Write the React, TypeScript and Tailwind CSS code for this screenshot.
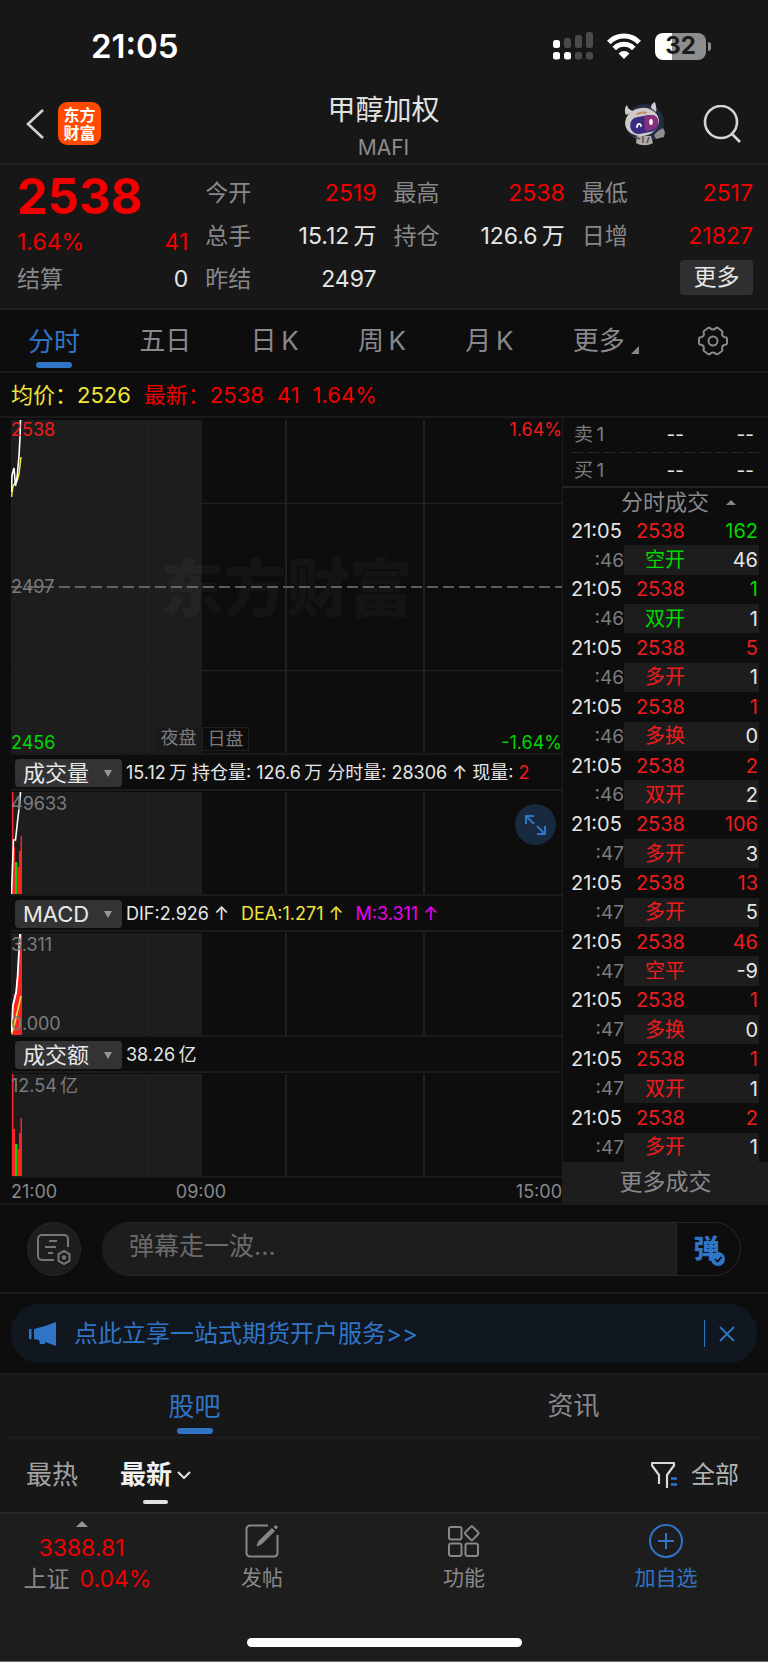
import type { ReactNode } from "react";

const RED = "text-[#ee1c1c]";
const GREEN = "text-[#00d800]";

const trades = [
  { sec: ":46", price: "2538", vol: "162", kind: "空开", diff: "46", up: false },
  { sec: ":46", price: "2538", vol: "1", kind: "双开", diff: "1", up: false },
  { sec: ":46", price: "2538", vol: "5", kind: "多开", diff: "1", up: true },
  { sec: ":46", price: "2538", vol: "1", kind: "多换", diff: "0", up: true },
  { sec: ":46", price: "2538", vol: "2", kind: "双开", diff: "2", up: true },
  { sec: ":47", price: "2538", vol: "106", kind: "多开", diff: "3", up: true },
  { sec: ":47", price: "2538", vol: "13", kind: "多开", diff: "5", up: true },
  { sec: ":47", price: "2538", vol: "46", kind: "空平", diff: "-9", up: true },
  { sec: ":47", price: "2538", vol: "1", kind: "多换", diff: "0", up: true },
  { sec: ":47", price: "2538", vol: "1", kind: "双开", diff: "1", up: true },
  { sec: ":47", price: "2538", vol: "2", kind: "多开", diff: "1", up: true },
];

const StatusBar = () => (
  <div className="flex h-[84px] items-center justify-between pt-2 pl-[91px] pr-[57px]">
    <span className="text-[33px] font-semibold leading-none text-white">21:05</span>
    <div className="flex items-center gap-[14px]">
      <svg className="h-7 w-10" viewBox="0 0 40 28">
        <g fill="#4a4a4a">
          <rect x="11" y="6" width="7" height="10" rx="2.5" />
          <rect x="22" y="3" width="7" height="13" rx="2.5" />
          <rect x="33" y="0" width="7" height="16" rx="2.5" />
          <rect x="22" y="20" width="7" height="7.5" rx="2.5" />
          <rect x="33" y="20" width="7" height="7.5" rx="2.5" />
        </g>
        <g fill="#fff">
          <rect x="0" y="8" width="7" height="8" rx="2.5" />
          <rect x="0" y="20" width="7" height="7.5" rx="2.5" />
          <rect x="11" y="20" width="7" height="7.5" rx="2.5" />
        </g>
      </svg>
      <svg className="h-[26px] w-[34px]" viewBox="0 0 34 26" fill="none" stroke="#fff" strokeWidth="5">
        <path d="M1.8 9.4a21.5 21.5 0 0 1 30.4 0" />
        <path d="M7.2 15.4a13.8 13.8 0 0 1 19.6 0" />
        <path d="M17 26l-5.400-5.600a7.400 7.400 0 0 1 10.800 0z" fill="#fff" stroke="none" />
      </svg>
      <div className="flex items-center gap-[2px]">
        <div className="flex h-[27px] w-[51px] items-center justify-center rounded-[8px] bg-linear-to-r from-white from-33% to-[#8e8e8e] to-33% text-[24px] font-bold leading-none text-[#1b1b1b]">
          32
        </div>
        <div className="h-[9px] w-[3px] rounded-r-full bg-[#8e8e8e]" />
      </div>
    </div>
  </div>
);

const Robot = () => (
  <svg className="h-[44px] w-[44px]" viewBox="0 0 44 44">
    <circle cx="22" cy="21" r="19" fill="#232c40" />
    <path d="M3 13c-2-4-1-8 1-10 1 4 4 6 8 6zM28 6c0-3 1-5 4-6 1 4 2 7 1 10z" fill="#cfcaca" />
    <ellipse cx="19" cy="20" rx="17" ry="14" fill="#cfcaca" transform="rotate(-10 19 20)" />
    <path d="M13 12c3-3 8-3 11-2l-1 2c-4-1-6 0-9 1z" fill="#c08a60" />
    <rect x="7" y="14" width="28" height="17" rx="8" fill="#3a2a80" transform="rotate(-10 21 22)" />
    <path d="M21 14l8-1c5 0 7 5 6 9s-6 7-13 7z" fill="#87307c" />
    <path d="M14 25c0-4 4-4 4-1" fill="none" stroke="#fff" strokeWidth="1.8" strokeLinecap="round" />
    <ellipse cx="28" cy="20" rx="1.8" ry="3" fill="#fff" />
    <path d="M14 34h14l2 7c-5 3-12 3-17 0z" fill="#b0aaaa" />
    <path d="M31 33l4-4 5-3 2 4-1 5-8 2z" fill="#8f8b90" />
    <path d="M20 34v7M12 35l5 2M26 35l-2 6" stroke="#5b555c" strokeWidth="1.5" />
  </svg>
);

const Header = () => (
  <header className="flex h-[81px] items-center border-b-2 border-[#222] pl-[26px] pr-[27px]">
    <div className="flex flex-1 items-center gap-3">
      <button aria-label="返回">
        <svg className="h-8 w-5" viewBox="0 0 20 32" fill="none" stroke="#d0d0d0" strokeWidth="2.6">
          <path d="M17 2L2 16l15 14" />
        </svg>
      </button>
      <div className="flex h-[43px] w-[43px] flex-col items-center justify-center rounded-[9px] bg-[#ff4a00] text-[16px] font-bold leading-[18px] text-white">
        <span>东方</span>
        <span>财富</span>
      </div>
    </div>
    <div className="flex flex-col items-center pt-1">
      <h1 className="text-[28px] leading-9 text-[#e2e2e2]">甲醇加权</h1>
      <p className="pt-2 text-[21px] leading-6 text-[#8b8b90]">MAFI</p>
    </div>
    <div className="flex flex-1 items-center justify-end gap-[36px]">
      <button aria-label="助手"><Robot /></button>
      <button aria-label="搜索">
        <svg className="h-[38px] w-[38px]" viewBox="0 0 38 38" fill="none" stroke="#d4d4d4" strokeWidth="2.6">
          <circle cx="18" cy="17" r="16" />
          <path d="M29 29l8 8" />
        </svg>
      </button>
    </div>
  </header>
);

const Stat = ({ label, value, red }: { label: string; value: string; red?: boolean }) => (
  <div className="flex h-[43px] items-center justify-between">
    <dt className="text-[#88888c]">{label}</dt>
    <dd className={red ? "text-[#f00000]" : "text-[#e6e6e6]"}>{value}</dd>
  </div>
);

const Quote = () => (
  <section className="grid h-[145px] grid-cols-4 gap-x-[17px] border-b-2 border-[#222] pl-[17px] pr-[15px] pt-[7px] text-[23px]">
    <div>
      <div className="h-[49px] text-[49px] font-bold leading-[49px] text-[#f00000]">2538</div>
      <div className="flex h-[37px] items-end justify-between leading-[31px] text-[#f00000]">
        <span>1.64%</span>
        <span>41</span>
      </div>
      <dl><Stat label="结算" value="0" /></dl>
    </div>
    <dl>
      <Stat label="今开" value="2519" red />
      <Stat label="总手" value="15.12&thinsp;万" />
      <Stat label="昨结" value="2497" />
    </dl>
    <dl>
      <Stat label="最高" value="2538" red />
      <Stat label="持仓" value="126.6&thinsp;万" />
    </dl>
    <div className="flex flex-col">
      <dl>
        <Stat label="最低" value="2517" red />
        <Stat label="日增" value="21827" red />
      </dl>
      <button className="mt-[2px] h-[35px] w-[73px] self-end rounded-[4px] bg-[#303030] leading-none text-[#e6e6e6]">
        更多
      </button>
    </div>
  </section>
);

const Periods = () => (
  <nav className="flex h-[63px] items-center justify-between border-b-2 border-[#1c1c1c] pl-7 pr-10 text-[26px] leading-none text-[#88888c]">
    <button className="flex h-full flex-col items-center justify-end gap-[7px] pb-[3px] text-[#3074c6]">
      分时
      <span className="h-[6px] w-9 rounded-[3px] bg-[#3074c6]" />
    </button>
    <button>五日</button>
    <button>日&thinsp;K</button>
    <button>周&thinsp;K</button>
    <button>月&thinsp;K</button>
    <button className="flex items-end gap-[6px]">
      更多
      <svg className="h-2 w-2" viewBox="0 0 8 8"><path d="M8 0v8H0z" fill="#88888c" /></svg>
    </button>
    <button aria-label="设置">
      <svg className="h-8 w-[30px]" viewBox="0 0 30 32" fill="none" stroke="#88888c" strokeWidth="2" strokeLinejoin="round">
        <path d="M10 3q2-1 3 1q2 1 4 0q1-2 3-1l4 3q1 1 0 3q0 2 2 3q3 0 3 2v4q0 2-3 2q-2 1-2 3q1 2 0 3l-4 3q-2 1-3-1q-2-1-4 0q-1 2-3 1l-4-3q-1-1 0-3q0-2-2-3q-3 0-3-2v-4q0-2 3-2q2-1 2-3q-1-2 0-3z" />
        <circle cx="15" cy="16" r="4.500" />
      </svg>
    </button>
  </nav>
);

// Night session shading plus the vertical session lines, shared by all panes
const Plot = ({ height, children }: { height: number; children?: ReactNode }) => (
  <svg className="block h-full w-full" viewBox={`0 0 551 ${height}`} preserveAspectRatio="none" fill="none">
    <rect width="191" height={height} fill="#1d1d1d" />
    <path d={`M137.5 0V${height}`} stroke="#222" />
    <path d={`M275 0V${height}M413 0V${height}`} stroke="#212121" strokeWidth="2" />
    {children}
  </svg>
);

const VolumeBars = () => (
  <>
    <path d="M1 102V0h1.500v55H4v47zM6.500 102V75H8V59h1.500V44H11v58z" fill="#f92424" />
    <path d="M4 102V70h2.500v32z" fill="#00d800" />
  </>
);

const Indicator = ({ name, info, children }: { name: string; info: ReactNode; children: ReactNode }) => (
  <>
    <div className="flex h-9 items-center gap-1 border-b-2 border-[#1c1c1c] pl-1 pt-[2px]">
      <button className="flex h-7 w-[107px] shrink-0 items-center justify-between rounded-[4px] bg-[#333] pl-2 pr-[10px] text-[22px] leading-none text-[#e8e8e8]">
        {name}
        <svg className="h-[7px] w-2" viewBox="0 0 8 7"><path d="M0 0h8L4 7z" fill="#96969a" /></svg>
      </button>
      <div className="flex gap-[5px] whitespace-nowrap text-[18px] leading-none text-[#e6e6e6]">{info}</div>
    </div>
    <div className="relative h-[105px] border-b-2 border-[#1a1a1a] pt-px text-[18px] leading-[22px] text-[#7b7b80]">
      {children}
    </div>
  </>
);

const Charts = () => (
  <div className="min-w-0 flex-1">
    <div className="relative h-[337px] border-b-2 border-[#1a1a1a] pt-[2px] text-[18px] leading-5">
      <svg className="block h-full w-full" viewBox="0 0 551 333" preserveAspectRatio="none" fill="none">
        <rect width="191" height="333" fill="#1d1d1d" />
        <path d="M137.5 0V333" stroke="#222" />
        <path d="M275 0V333M413 0V333" stroke="#212121" strokeWidth="2" />
        <path d="M0 83.5H551M0 250.5H551" stroke="#222" strokeWidth="1.5" />
        <path d="M0 167H551" stroke="#77777b" strokeWidth="1.5" strokeDasharray="11 5" />
        <path d="M.5 77L2 66l2-3 2-2 2-7 2-17" stroke="#f0e63a" strokeWidth="1.5" />
        <path d="M.5 72L1 55l2-7 1.500 18L6 58l2-22 1-18 .5-18" stroke="#fff" strokeWidth="1.6" />
      </svg>
      <div className="absolute inset-x-0 top-[135px] text-center text-[63px] font-black leading-[70px] text-white/3">
        东方财富
      </div>
      <span className={`absolute left-0 top-[2px] ${RED}`}>2538</span>
      <span className={`absolute right-0 top-[2px] ${RED}`}>1.64%</span>
      <span className="absolute left-0 top-[159px] text-[#7b7b80]">2497</span>
      <span className={`absolute bottom-0 left-0 ${GREEN}`}>2456</span>
      <span className={`absolute bottom-0 right-0 ${GREEN}`}>-1.64%</span>
      <div className="absolute bottom-[2px] left-[144px] flex leading-[22px] text-[#7b7b80]">
        <span className="w-[47px] bg-[#1a1a1a] text-center">夜盘</span>
        <span className="w-[47px] border border-[#1f1f1f] bg-[#0d0d0d] text-center">日盘</span>
      </div>
    </div>

    <Indicator
      name="成交量"
      info={
        <>
          <span>15.12&thinsp;万</span>
          <span>持仓量: 126.6&thinsp;万</span>
          <span>分时量: 28306 ↑</span>
          <span>现量: <span className={RED}>2</span></span>
        </>
      }
    >
      <Plot height={102}>
        <VolumeBars />
        <path d="M.5 102L2.500 48h2L7 25l1.500-12L9.500 0" stroke="#fff" strokeWidth="1.6" />
      </Plot>
      <span className="absolute left-0 top-[2px]">49633</span>
      <button aria-label="全屏" className="absolute right-[6px] top-[13px] flex h-[41px] w-[41px] items-center justify-center rounded-full bg-[#172a40]">
        <svg className="h-5 w-[21px]" viewBox="0 0 21 20" fill="none" stroke="#3074c6" strokeWidth="2">
          <path d="M1 9V1h8M1 1l8 8M20 11v8h-8M20 19l-8-8" />
        </svg>
      </button>
    </Indicator>

    <Indicator
      name="MACD"
      info={
        <>
          <span className="mr-[7px]">DIF:2.926 ↑</span>
          <span className="mr-[7px] text-[#efe33a]">DEA:1.271 ↑</span>
          <span className="text-[#f000f0]">M:3.311 ↑</span>
        </>
      }
    >
      <Plot height={102}>
        <path d="M1 102V80h1.500V61H5V45h2V20h1.500V1H11v101z" fill="#f92424" />
        <path d="M.5 101l3-10L7 76l3-13" stroke="#f0e63a" strokeWidth="1.6" />
        <path d="M.5 99L2 72l3-12 1.500-15L8 18l1-17" stroke="#fff" strokeWidth="1.8" />
      </Plot>
      <span className="absolute left-0 top-[2px]">3.311</span>
      <span className="absolute bottom-0 left-0">0.000</span>
    </Indicator>

    <Indicator name="成交额" info={<span>38.26&thinsp;亿</span>}>
      <Plot height={102}><VolumeBars /></Plot>
      <span className="absolute left-0 top-[2px]">12.54&thinsp;亿</span>
    </Indicator>

    <div className="relative flex h-[25px] items-center justify-between pt-[2px] text-[18px] leading-none text-[#88888c]">
      <span>21:00</span>
      <span>15:00</span>
      <span className="absolute left-[190px] -translate-x-1/2">09:00</span>
    </div>
  </div>
);

const BookRow = ({ label }: { label: string }) => (
  <table className="w-full">
    <tbody>
      <tr className="h-8">
        <th className="pl-[11px] text-left font-normal text-[#7b7b80]">{label}</th>
        <td className="w-[70px] pr-[9px] text-right">--</td>
        <td className="w-[75px] pr-[14px] text-right">--</td>
      </tr>
    </tbody>
  </table>
);

const TradePanel = () => (
  <aside className="flex w-[206px] shrink-0 flex-col border-l border-[#1c1c1c] text-[19px] leading-none text-[#e6e6e6]">
    <BookRow label="卖&thinsp;1" />
    <div className="mb-px ml-[9px] mr-2 mt-[2px] h-px bg-[repeating-linear-gradient(90deg,#2c2c2c_0_11px,transparent_11px_16px)]" />
    <div className="border-b-2 border-[#242424]">
      <BookRow label="买&thinsp;1" />
    </div>
    <button className="flex h-7 items-center justify-end gap-[17px] pr-8 text-[22px] leading-none text-[#88888c]">
      分时成交
      <svg className="h-[5px] w-[10px]" viewBox="0 0 10 5"><path d="M0 5h10L5 0z" fill="#88888c" /></svg>
    </button>
    <table className="mr-[9px] h-[646px] text-[20px]">
      <tbody>
        {trades.map((t, i) => [
          <tr key={`${i}-a`}>
            <td className="pl-2">21:05</td>
            <td className={`pr-[23px] text-right ${RED}`}>{t.price}</td>
            <td className={`pr-px text-right ${t.up ? RED : GREEN}`}>{t.vol}</td>
          </tr>,
          <tr key={`${i}-b`}>
            <td className="w-[61px] text-right text-[19px] text-[#7b7b80]">{t.sec}</td>
            <td className={`w-[84px] bg-[#1d1d1d] pr-[23px] text-right ${t.up ? RED : GREEN}`}>{t.kind}</td>
            <td className="bg-[#1d1d1d] pr-px text-right">{t.diff}</td>
          </tr>,
        ])}
      </tbody>
    </table>
    <button className="flex-1 bg-[#1d1d1d] text-[23px] text-[#88888c]">更多成交</button>
  </aside>
);

const Danmu = () => (
  <div className="flex h-[91px] items-center gap-[21px] border-y-2 border-[#1a1a1a] px-[27px]">
    <button aria-label="弹幕设置" className="flex h-[54px] w-[54px] items-center justify-center rounded-full border border-[#262626] bg-[#1d1d1d]">
      <svg className="h-8 w-[34px]" viewBox="0 0 34 32" fill="none" stroke="#77777b" strokeWidth="2">
        <path d="M31 14V6a4 4 0 0 0-4-4H5a4 4 0 0 0-4 4v17a4 4 0 0 0 4 4h12M12 8h8M8 14h11M11 20h5" />
        <path d="M27 18l5.500 3v7L27 31l-5.500-3v-7z" />
        <circle cx="27" cy="24.5" r="1.2" />
      </svg>
    </button>
    <div className="flex h-[54px] flex-1 overflow-hidden rounded-full border border-[#262626]">
      <input
        aria-label="弹幕"
        placeholder="弹幕走一波..."
        className="min-w-0 flex-1 bg-[#1d1d1d] pb-1 pl-[26px] text-[25px] outline-none placeholder:text-[#6b6b6b]"
      />
      <button className="relative w-[64px] border-l border-[#262626] pr-1 text-[26px] font-black leading-none text-[#3074c6]">
        弹
        <svg className="absolute bottom-[9px] right-[15px] h-[14px] w-[14px]" viewBox="0 0 14 14" fill="none">
          <circle cx="7" cy="7" r="7" fill="#3074c6" />
          <path d="M4 7l2.500 2.500 4-4.500" stroke="#0d0d0d" strokeWidth="1.6" />
        </svg>
      </button>
    </div>
  </div>
);

const Banner = () => (
  <div className="border-b-2 border-[#1c1c1c] px-[11px] py-[10px]">
    <div className="flex h-[59px] items-center rounded-[28px] bg-[#10171e] pl-[18px] pr-[22px] text-[#3074c6]">
      <svg className="h-6 w-[27px]" viewBox="0 0 27 24" fill="#3074c6">
        <path d="M0 7h2.500v10H0zM5 7l11-3 11-4v24l-11-4v2h-5l-1-4-5-1z" />
      </svg>
      <a href="#open" className="flex-1 pl-[18px] text-[24px] leading-none">点此立享一站式期货开户服务&gt;&gt;</a>
      <span className="mr-[14px] h-[27px] w-px bg-[#3074c6]" />
      <button aria-label="关闭">
        <svg className="h-4 w-4" viewBox="0 0 16 16" fill="none" stroke="#3074c6" strokeWidth="1.8"><path d="M1 1l14 14M15 1L1 15" /></svg>
      </button>
    </div>
  </div>
);

const Feed = () => (
  <section className="bg-[#171717]">
    <div className="mx-[5px] grid h-[63px] grid-cols-2 border-b border-[#202022] text-[26px] leading-none text-[#88888c]">
      <button className="flex flex-col items-center justify-end gap-[8px] pb-[3px] text-[#3074c6]">
        股吧
        <span className="h-[6px] w-9 rounded-[3px] bg-[#3074c6]" />
      </button>
      <button>资讯</button>
    </div>
    <div className="flex h-[74px] items-center px-[26px] text-[26px] leading-none">
      <button className="text-[#a2a2a2]">最热</button>
      <button className="relative ml-[42px] flex items-center gap-[5px] font-bold text-[#f2f2f2]">
        最新
        <svg className="h-2 w-[14px]" viewBox="0 0 14 8" fill="none" stroke="#e0e0e0" strokeWidth="2"><path d="M1 1l6 6 6-6" /></svg>
        <span className="absolute -bottom-4 left-[23px] h-1 w-[25px] rounded-[2px] bg-[#e0e0e0]" />
      </button>
      <button className="ml-auto flex items-center gap-[14px] pr-[3px] text-[24px] text-[#b4b4b4]">
        <svg className="h-7 w-[26px]" viewBox="0 0 26 28" fill="none">
          <path d="M8 23v-9L1 4.500V2h22v2.500L16 14v13" stroke="#d8d8d8" strokeWidth="2.2" strokeLinejoin="round" />
          <path d="M20 17.500h6M20 23.500h6" stroke="#3074c6" strokeWidth="2.6" />
        </svg>
        全部
      </button>
    </div>
  </section>
);

const BottomBar = () => (
  <footer className="border-t-2 border-b border-t-[#262628] border-b-[#6a6a6a] bg-[#1d1d1d]">
    <div className="flex h-[124px] pt-[7px] text-[#88888c]">
      <button className="flex w-[175px] flex-col items-center self-start text-[23px] text-[#f00000]">
        <svg className="mr-3 h-[6px] w-3" viewBox="0 0 12 6"><path d="M0 6h12L6 0z" fill="#96969a" /></svg>
        <span className="mr-3 h-[39px] leading-[42px]">3388.81</span>
        <span className="leading-[26px]"><span className="mr-[10px] text-[#88888c]">上证</span>0.04%</span>
      </button>
      <div className="flex flex-1 justify-between pl-[55px] pr-[70px] text-[21px] leading-[31px]">
        <button className="flex w-[64px] flex-col items-center gap-1 self-start pt-[3px]">
          <svg className="h-[34px] w-[34px]" viewBox="0 0 34 34" fill="none" stroke="#88888c" strokeWidth="2">
            <path d="M23 1.500H5A3.500 3.500 0 0 0 1.500 5v24A3.500 3.500 0 0 0 5 32.500h24a3.500 3.500 0 0 0 3.500-3.500V11" />
            <path d="M12 22l2-5L27 4.500l2.500 2.500L17 19.500zM29 3l2-1.500 1.500 1.500L31 5z" fill="#88888c" strokeWidth="1" />
          </svg>
          发帖
        </button>
        <button className="flex w-[64px] flex-col items-center gap-1 self-start pt-[3px]">
          <svg className="h-[34px] w-[34px]" viewBox="0 0 34 34" fill="none" stroke="#88888c" strokeWidth="2">
            <rect x="2" y="3" width="12.5" height="12.5" rx="2" />
            <rect x="2" y="19.5" width="12.5" height="12.5" rx="2" />
            <rect x="18.5" y="19.5" width="12.5" height="12.5" rx="2" />
            <rect x="19.5" y="4" width="10.5" height="10.5" rx="1.5" transform="rotate(45 24.75 9.25)" />
          </svg>
          功能
        </button>
        <button className="flex w-[64px] flex-col items-center gap-1 self-start whitespace-nowrap pt-[3px] text-[#3074c6]">
          <svg className="h-[34px] w-[34px]" viewBox="0 0 34 34" fill="none" stroke="#3074c6" strokeWidth="2">
            <circle cx="17" cy="17" r="16" />
            <path d="M17 9v16M9 17h16" />
          </svg>
          加自选
        </button>
      </div>
    </div>
    <div className="mx-auto mb-[14px] h-[9px] w-[275px] rounded-full bg-white" />
  </footer>
);

export default function App() {
  return (
    <div className="min-h-screen bg-[#0d0d0d] font-['Inter','Noto_Sans_CJK_SC',sans-serif]">
      <div className="bg-[#171717]">
        <StatusBar />
        <Header />
        <Quote />
      </div>
      <Periods />
      <p className="flex h-[43px] items-center gap-[13px] pl-[11px] text-[22px] leading-none text-[#f00000]">
        <span className="text-[#f0e63a]">均价：2526</span>
        <span>最新：2538</span>
        <span>41</span>
        <span>1.64%</span>
      </p>
      <main className="flex border-t-2 border-[#1a1a1a] pl-[11px]">
        <Charts />
        <TradePanel />
      </main>
      <Danmu />
      <Banner />
      <Feed />
      <BottomBar />
    </div>
  );
}
